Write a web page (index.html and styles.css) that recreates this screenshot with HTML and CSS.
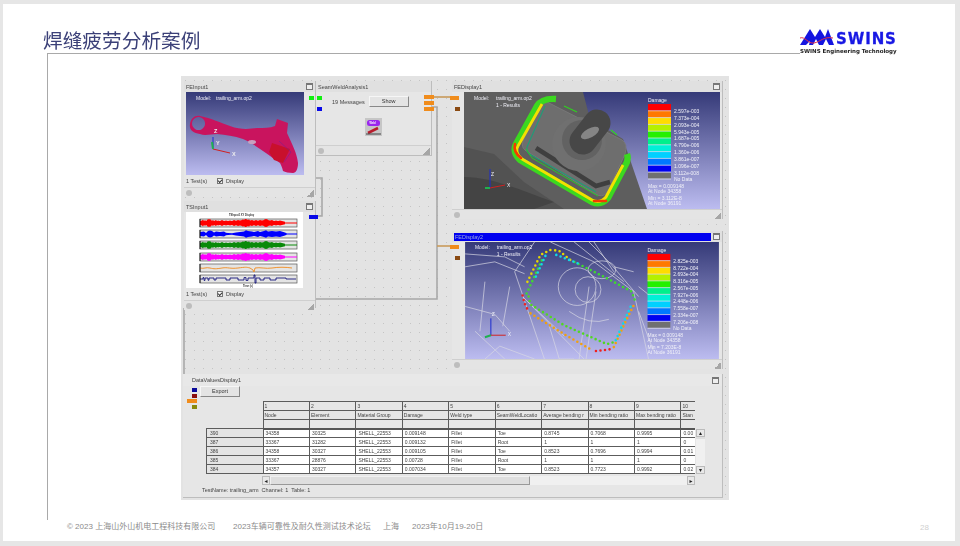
FILE: index.html
```html
<!DOCTYPE html>
<html lang="zh">
<head>
<meta charset="utf-8">
<title>焊缝疲劳分析案例</title>
<link rel="stylesheet" href="styles.css">
</head>
<body>
<main class="slide">
  <header class="head">
    <h1 class="title">焊缝疲劳分析案例</h1>
    <div class="logo">
      <div class="logo-top">
        <svg class="logo-mark" viewBox="0 0 34 17" aria-hidden="true">
          <path class="logo-blue" d="M0 16 10 0 15 8 20 0 25 8 28 0 34 16H29L26 10 23 16H19L16 10 13 16H9L10 12 6 16Z"/>
          <path class="logo-red" d="M0 9C5 7 8 15 14 14S24 7 33 9"/>
        </svg>
        <span class="logo-name">SWINS</span>
      </div>
      <div class="logo-sub">SWINS Engineering Technology</div>
    </div>
  </header>

  <section class="frame">
    <figure class="canvas">
      <svg class="wires" viewBox="0 0 548 424" aria-hidden="true">
        <path class="wire" d="M134 102H141V140H137"/>
        <path class="wire" d="M134 223H256V31H250"/>
        <path class="wire" d="M3 232V323H9"/>
        <path class="wire wire-o" d="M250 21H271"/>
        <path class="wire wire-o" d="M256 170H271"/>
      </svg>

      <article class="win win-fe">
        <div class="bar"><span>FEInput1</span><i class="max"></i></div>
        <svg class="view view-sm" viewBox="0 0 118 83" aria-hidden="true">
          <defs>
            <linearGradient id="sky" x1="0" y1="0" x2="0" y2="1"><stop offset="0" stop-color="#353a78"/><stop offset="1" stop-color="#bcbcf0"/></linearGradient>
          </defs>
          <rect width="118" height="83" fill="url(#sky)"/>
          <path fill="#c9145e" fill-rule="evenodd" d="M14 24C25 26 35 31 44 34 55 38 63 37 71 36 78 36 84 36 89 34L91 27 102 31 101 41C106 52 111 61 112 71 112 77 110 81 107 81 103 81 99 80 97 79 96 75 95 73 94 71 88 67 83 63 77 59 70 54 64 50 57 47 48 44 40 43 31 42 25 42 19 44 14 42 7 41 3 38 4 32 5 26 9 23 14 24ZM12.5 25A6.5 6.5 0 1 0 12.6 25Z"/>
          <ellipse cx="66" cy="50" rx="4" ry="2" fill="#c8a0c0"/>
          <path fill="#c8102c" d="M86 51 104 57 97 71 88 68 83 60Z"/>
          <path fill="none" stroke="#7d1f8a" stroke-width=".6" d="M93 49 105 60 98 70"/>
          <path class="ax-b" d="M27 57V45"/><path class="ax-r" d="M27 57 44 61"/><path class="ax-g" d="M27 57 26 50"/>
          <text class="t6b" x="28" y="41">Z</text><text class="t6b" x="30" y="53">Y</text><text class="t6b" x="46" y="64">X</text>
          <text class="t5w" x="10" y="8">Model:</text><text class="t5w" x="30" y="8">trailing_arm.op2</text>
        </svg>
        <div class="status"><span class="tests">1 Test(s)</span><i class="check"></i><span>Display</span></div>
        <div class="foot"><i class="knob"></i><i class="grip"></i></div>
      </article>

      <article class="win win-seam">
        <div class="bar"><span>SeamWeldAnalysis1</span></div>
        <div class="seam-row"><span>19 Messages</span><button class="btn btn-show">Show</button></div>
        <svg class="seam-icon" viewBox="0 0 17 18" aria-hidden="true">
          <rect width="17" height="18" fill="#c6c6c6"/>
          <rect x="2" y="2" width="13" height="6" rx="2.5" fill="#9a28ee"/>
          <text class="t3w" x="4.5" y="6.3">Weld</text>
          <path d="M3 15 13 10" stroke="#b81c2c" stroke-width="2.6"/>
          <path d="M1 16H16" stroke="#444" stroke-width="1"/>
        </svg>
        <div class="foot foot-end"><i class="knob"></i><i class="grip"></i></div>
      </article>

      <article class="win win-ts">
        <div class="bar"><span>TSInput1</span><i class="max"></i></div>
        <svg class="view view-ts" viewBox="0 0 117 76" aria-hidden="true">
          <defs>
            <path id="wave" d="M0 2 2 1.5 3 .4 4 2 5 1 6 2 7 1.2 8 0 9 .6 10 0 11 1 12 1.8 13 1 14 2 16 1 17 2 18 1.4 20 2 22 1 24 2 26 1.4 28 2 30 1.5 32 2 34 1 36 1.8 38 1 40 1.6 42 1 43 .2 44 1 45 0 46 0 47 .4 48 1 49 .2 50 1.6 52 1 54 1.8 56 1 58 1.8 60 1 62 1.4 64 1 65 0 66 .2 67 0 68 1 70 1.6 72 1 74 2 76 1.4 78 2 80 1.6 82 2 85 2.8V3.6H97V4.4H85V5.2L82 6 80 6.4 78 6 76 6.6 74 6 72 7 70 6.4 68 7 67 8 66 7.8 65 8 64 7 62 6.6 60 7 58 6.2 56 7 54 6.2 52 7 50 6.4 49 7.8 48 7 47 7.6 46 8 45 8 44 7 43 7.8 42 7 40 6.4 38 7 36 6.2 34 7 32 6 30 6.5 28 6 26 6.6 24 6 22 7 20 6 18 6.6 17 6 16 7 14 6 13 7 12 6.2 11 7 10 8 9 7.4 8 8 7 6.8 6 6 5 7 4 6 3 7.6 2 6.5 0 6Z"/>
            <path id="wave-b" d="M0 2 4 1.5 6 3 8 1 10 .6 12 1 14 2.6 16 1.4 20 2 24 1.4 26 2.8 28 3 32 3.2 36 2.4 40 2 44 1.4 46 .2 48 1 52 1.6 54 2 58 1 60 2 64 1 66 .2 68 1.4 72 1 76 1.6 80 1 85 2.6 87 3.4H97V4.6H87L85 5.4 80 7 76 6.4 72 7 68 6.6 66 7.8 64 7 60 6 58 7 54 6 52 6.4 48 7 46 7.8 44 6.6 40 6 36 5.6 32 4.8 28 5 26 5.2 24 6.6 20 6 16 6.6 14 5.4 12 7 10 7.4 8 7 6 5 4 6.5 0 6Z"/>
            <path id="trace" d="M0 4C4 5 6 3 10 4S16 5 22 4 30 5 38 4 46 3 50 4L53 6 54 8 55 4C60 3 66 5 72 4S86 3 92 4"/>
            <path id="trace-b" d="M0 4H3V2.6H4V5.4H5V3H8V5.2H9V3H14V5H16V3H26V5H30V3H38V5H44V2.6H46V5.4H48V3H54V0H55V8H56V3H60V5H64V3H70V5H76V3H86V4H96"/>
          </defs>
          <rect width="117" height="76" fill="#fff"/>
          <text class="t3k" x="43" y="3.5">TSInput1 XY Display</text>
          <g class="strip">
            <g transform="translate(14 7)"><rect class="plot" width="97" height="8"/><use href="#wave" class="w-red"/></g>
            <g transform="translate(14 18)"><rect class="plot" width="97" height="8"/><use href="#wave-b" class="w-blue"/></g>
            <g transform="translate(14 29)"><rect class="plot" width="97" height="8"/><use href="#wave" class="w-green"/></g>
            <g transform="translate(14 41)"><rect class="plot" width="97" height="8"/><use href="#wave" class="w-mag"/></g>
            <g transform="translate(14 52)"><rect class="plot" width="97" height="8"/><use href="#trace" class="l-or"/></g>
            <g transform="translate(14 63)"><rect class="plot" width="97" height="8"/><use href="#trace-b" class="l-navy"/></g>
          </g>
          <path class="axisl" d="M14 7V15M14 18V26M14 29V37M14 41V49M14 52V60M14 63V71"/>
          <text class="t3k" x="57" y="75">Time (s)</text>
        </svg>
        <div class="status"><span class="tests">1 Test(s)</span><i class="check"></i><span>Display</span></div>
        <div class="foot"><i class="knob"></i><i class="grip"></i></div>
      </article>

      <article class="win win-d1">
        <div class="bar"><span>FEDisplay1</span><i class="max"></i></div>
        <svg class="view view-lg" viewBox="0 0 256 117" aria-hidden="true">
          <rect width="256" height="117" fill="url(#sky)"/>
          <path fill="#5e5e5e" d="M0 0H119L126 27 159 47 183 117H0Z"/>
          <path fill="#525252" d="M0 55 30 62 60 90 100 117H0Z"/>
          <path fill="#444" d="M0 85C30 85 60 100 90 110L70 117H0Z"/>
          <path fill="#6e6e6e" stroke="#787878" d="M83 10 158 48Q164 52 161 62L143 101Q138 106 131 102L61 58Q57 55 59 49L74 16Q78 8 83 10Z"/>
          <path fill="none" stroke="#3f3f3f" stroke-width="4.5" d="M72 56 132 94 146 90"/>
          <path fill="none" stroke="#1f9c78" stroke-width="1.1" d="M81 14 63 55Q62 60 67 63L132 100"/>
          <path fill="none" stroke="#28c828" stroke-width="1" d="M62 57 68 66 134 104"/>
          <circle cx="115" cy="52" r="27" fill="#707070"/>
          <circle cx="118" cy="48" r="20" fill="#626262"/>
          <path stroke="#474747" stroke-width="27" stroke-linecap="round" d="M133 31 119 49"/>
          <ellipse cx="126" cy="41" rx="10" ry="4.5" transform="rotate(-28 126 41)" fill="#858585"/>
          <path fill="none" stroke="#3cd820" stroke-width="6.4" stroke-linejoin="round" d="M92 7Q78 6 73 14L52 52Q48 60 56 68L128 110Q137 114 144 106L161 74Q165 68 163 62"/>
          <path fill="none" stroke="#f4e000" stroke-width="2.8" stroke-linejoin="round" d="M78 12 54 54Q50 60 58 67L128 108Q136 112 142 105L159 73"/>
          <path fill="none" stroke="#f43a00" stroke-width="2.6" stroke-linecap="round" d="M51 52Q49 60 57 66M130 109 142 109"/>
          <path fill="none" stroke="#30d020" stroke-width="1.2" d="M100 14 113 20M147 38 153 43"/>
          <path class="ax-b" d="M26 96V77"/><path class="ax-r" d="M26 96 41 93"/><path class="ax-g" d="M26 96 21 96"/>
          <text class="t5w" x="27" y="84">Z</text><text class="t5w" x="43" y="95">X</text>
          <text class="t5w" x="10" y="8">Model:</text><text class="t5w" x="32" y="8">trailing_arm.op2</text>
          <text class="t5w" x="32" y="15">1 - Results</text>
          <text class="t5w" x="184" y="10">Damage</text>
          <g class="legend">
            <rect class="c1" x="184" y="12" width="23" height="6.8"/><rect class="c2" x="184" y="18.8" width="23" height="6.8"/><rect class="c3" x="184" y="25.6" width="23" height="6.8"/><rect class="c4" x="184" y="32.4" width="23" height="6.8"/><rect class="c5" x="184" y="39.2" width="23" height="6.8"/><rect class="c6" x="184" y="46" width="23" height="6.8"/><rect class="c7" x="184" y="52.8" width="23" height="6.8"/><rect class="c8" x="184" y="59.6" width="23" height="6.8"/><rect class="c9" x="184" y="66.4" width="23" height="6.8"/><rect class="c10" x="184" y="73.2" width="23" height="6.8"/><rect class="c11" x="184" y="80.6" width="23" height="6"/>
            <path class="ticks" d="M184 18.8H207M184 25.6H207M184 32.4H207M184 39.2H207M184 46H207M184 52.8H207M184 59.6H207M184 66.4H207M184 73.2H207M184 80H207M184 87H207"/>
          </g>
          <text class="t5w" x="210" y="21">2.597e-003</text><text class="t5w" x="210" y="28">7.373e-004</text><text class="t5w" x="210" y="34.5">2.093e-004</text><text class="t5w" x="210" y="41.5">5.943e-005</text><text class="t5w" x="210" y="48">1.687e-005</text><text class="t5w" x="210" y="55">4.790e-006</text><text class="t5w" x="210" y="62">1.360e-006</text><text class="t5w" x="210" y="69">3.861e-007</text><text class="t5w" x="210" y="75.5">1.096e-007</text><text class="t5w" x="210" y="82.5">3.112e-008</text><text class="t5w" x="210" y="89">No Data</text>
          <text class="t5w" x="184" y="96">Max = 0.009148</text><text class="t5w" x="184" y="100.5">At Node 34358</text><text class="t5w" x="184" y="108">Min = 3.112E-8</text><text class="t5w" x="184" y="112.5">At Node 36191</text>
        </svg>
        <div class="foot"><i class="knob"></i><i class="grip"></i></div>
      </article>

      <article class="win win-d2">
        <div class="bar bar-active"><span>FEDisplay2</span><i class="max"></i></div>
        <svg class="view view-lg" viewBox="0 0 256 118" aria-hidden="true">
          <rect width="256" height="118" fill="url(#sky)"/>
          <g class="mesh">
            <path d="M0 12 40 15 60 25M0 25 30 20 60 32M70 0 50 30 80 118M86 0 130 20 170 50 185 118M110 0 160 40M125 0 145 20 175 55M45 45 38 85M20 40 15 90M0 65 30 73 45 90M58 55 120 118M10 90 40 118M130 0 150 30M125 45 115 118M132 50 122 118M85 85 95 118H110M175 70 190 110M175 45 200 65M20 118 35 105 70 118M150 25 170 30M63 60 100 95"/>
            <circle cx="113" cy="45" r="19"/><circle cx="124" cy="48" r="13"/><ellipse cx="138" cy="28" rx="14" ry="9"/><path d="M105 70Q125 85 145 78"/>
          </g>
          <g class="dots">
            <path class="d-yl" d="M86 8 76 13 62 42"/>
            <path class="d-rd" d="M58 54 60 62 64 70"/>
            <path class="d-or" d="M66 72 100 93 128 109"/>
            <path class="d-rd" d="M132 110 148 108"/>
            <path class="d-or" d="M150 106 162 80 171 62"/>
            <path class="d-gr" d="M171 58 168 50 140 35 110 20"/>
            <path class="d-yl" d="M106 18 95 9 88 8"/>
            <path class="d-in" d="M64 55 66 63 100 84 143 103 150 101"/>
            <path class="d-gr" d="M62 52 79 15"/>
            <path class="d-cy" d="M152 99 167 65M81 14 70 38M92 13 115 22"/>
          </g>
          <path class="ax-b" d="M26 94V77"/><path class="ax-r" d="M26 94 41 94"/><path class="ax-g" d="M26 94 20 96"/>
          <text class="t5w" x="27" y="75">Z</text><text class="t5w" x="43" y="95">X</text>
          <text class="t5w" x="10" y="7.5">Model:</text><text class="t5w" x="32" y="7.5">trailing_arm.op2</text>
          <text class="t5w" x="32" y="14.5">1 - Results</text>
          <text class="t5w" x="184" y="10">Damage</text>
          <g class="legend">
            <rect class="c1" x="184" y="12" width="23" height="6.8"/><rect class="c2" x="184" y="18.8" width="23" height="6.8"/><rect class="c3" x="184" y="25.6" width="23" height="6.8"/><rect class="c4" x="184" y="32.4" width="23" height="6.8"/><rect class="c5" x="184" y="39.2" width="23" height="6.8"/><rect class="c6" x="184" y="46" width="23" height="6.8"/><rect class="c7" x="184" y="52.8" width="23" height="6.8"/><rect class="c8" x="184" y="59.6" width="23" height="6.8"/><rect class="c9" x="184" y="66.4" width="23" height="6.8"/><rect class="c10" x="184" y="73.2" width="23" height="6.8"/><rect class="c11" x="184" y="80.6" width="23" height="6"/>
            <path class="ticks" d="M184 18.8H207M184 25.6H207M184 32.4H207M184 39.2H207M184 46H207M184 52.8H207M184 59.6H207M184 66.4H207M184 73.2H207M184 80H207M184 87H207"/>
          </g>
          <text class="t5w" x="210" y="21">2.825e-003</text><text class="t5w" x="210" y="28">8.722e-004</text><text class="t5w" x="210" y="34.5">2.693e-004</text><text class="t5w" x="210" y="41.5">8.316e-005</text><text class="t5w" x="210" y="48">2.567e-005</text><text class="t5w" x="210" y="55">7.927e-006</text><text class="t5w" x="210" y="62">2.448e-006</text><text class="t5w" x="210" y="69">7.558e-007</text><text class="t5w" x="210" y="75.5">2.334e-007</text><text class="t5w" x="210" y="82.5">7.206e-008</text><text class="t5w" x="210" y="89">No Data</text>
          <text class="t5w" x="184" y="96">Max = 0.009148</text><text class="t5w" x="184" y="100.5">At Node 34358</text><text class="t5w" x="184" y="108">Min = 7.203E-8</text><text class="t5w" x="184" y="112.5">At Node 36191</text>
        </svg>
        <div class="foot"><i class="knob"></i><i class="grip"></i></div>
      </article>

      <article class="win win-data">
        <div class="bar bar-data"><span>DataValuesDisplay1</span><i class="max"></i></div>
        <button class="btn btn-export">Export</button>
        <div class="grid-wrap">
          <div class="table-clip">
            <table class="vals">
              <colgroup><col class="c-head"><col class="c-n"><col class="c-n"><col class="c-n"><col class="c-n"><col class="c-n"><col class="c-n"><col class="c-n"><col class="c-n"><col class="c-n"><col class="c-n"></colgroup>
              <thead>
                <tr><th class="blank"></th><th>1</th><th>2</th><th>3</th><th>4</th><th>5</th><th>6</th><th>7</th><th>8</th><th>9</th><th>10</th></tr>
                <tr><th class="blank"></th><th>Node</th><th>Element</th><th>Material Group</th><th>Damage</th><th>Weld type</th><th>SeamWeldLocatio</th><th>Average bending r</th><th>Min bending ratio</th><th>Max bending ratio</th><th>Stan</th></tr>
                <tr class="last-h"><th class="blank"></th><th></th><th></th><th></th><th></th><th></th><th></th><th></th><th></th><th></th><th></th></tr>
              </thead>
              <tbody>
                <tr><th>390</th><td>34358</td><td>30325</td><td>SHELL_22553</td><td>0.009148</td><td>Fillet</td><td>Toe</td><td>0.8745</td><td>0.7068</td><td>0.9995</td><td>0.00</td></tr>
                <tr><th>387</th><td>33367</td><td>31282</td><td>SHELL_22553</td><td>0.009132</td><td>Fillet</td><td>Root</td><td>1</td><td>1</td><td>1</td><td>0</td></tr>
                <tr><th>386</th><td>34358</td><td>30327</td><td>SHELL_22553</td><td>0.009105</td><td>Fillet</td><td>Toe</td><td>0.8523</td><td>0.7696</td><td>0.9994</td><td>0.01</td></tr>
                <tr><th>385</th><td>33367</td><td>28876</td><td>SHELL_22553</td><td>0.00728</td><td>Fillet</td><td>Root</td><td>1</td><td>1</td><td>1</td><td>0</td></tr>
                <tr><th>384</th><td>34357</td><td>30327</td><td>SHELL_22553</td><td>0.007034</td><td>Fillet</td><td>Toe</td><td>0.8523</td><td>0.7723</td><td>0.9992</td><td>0.02</td></tr>
              </tbody>
            </table>
            <div class="hscroll"><i class="arrow">◂</i><i class="thumb"></i><i class="track"></i><i class="arrow">▸</i></div>
          </div>
          <div class="vscroll"><i class="arrow">▴</i><i class="vthumb"></i><i class="vtrack"></i><i class="arrow">▾</i></div>
        </div>
        <div class="testname">TestName: trailing_arm  Channel: 1  Table: 1</div>
      </article>

      <i class="port p-g1"></i><i class="port p-g2"></i><i class="port p-b1"></i><i class="port p-b2"></i>
      <i class="port p-o1"></i><i class="port p-o2"></i><i class="port p-o3"></i>
      <i class="port p-o4"></i><i class="port p-br1"></i><i class="port p-o5"></i><i class="port p-br2"></i>
      <i class="port p-d1"></i><i class="port p-d2"></i><i class="port p-d3"></i><i class="port p-d4"></i>
    </figure>
  </section>

  <footer class="foot-line">
    <span class="f1">© 2023 上海山外山机电工程科技有限公司</span>
    <span class="f2">2023车辆可靠性及耐久性测试技术论坛</span>
    <span class="f3">上海</span>
    <span class="f4">2023年10月19-20日</span>
    <span class="page">28</span>
  </footer>
</main>
</body>
</html>
```

FILE: styles.css
```css
* { box-sizing: border-box; }
html, body { margin: 0; height: 100%; }
body {
  width: 960px;
  height: 546px;
  padding: 4px 5px 4px 3px;
  background: #e6e6e6;
  overflow: hidden;
  font-family: "Liberation Sans", "Noto Sans CJK SC", sans-serif;
}
.slide {
  height: 537px;
  background: #fff;
  display: flex;
  flex-direction: column;
}

/* header */
.head {
  height: 49px;
  display: flex;
  justify-content: space-between;
  padding-left: 40px;
  padding-right: 56px;
}
.title {
  margin: 23px 0 0;
  font: 400 19.7px/26px "Noto Sans CJK SC", sans-serif;
  color: #3b4078;
  filter: blur(.3px);
}
.logo { margin-top: 22px; width: 99px; filter: blur(.3px); position: relative; z-index: 1; }
.logo-top { display: flex; align-items: flex-end; height: 20px; }
.logo-mark { width: 34px; height: 17px; flex: none; }
.logo-blue { fill: #1414e0; }
.logo-red { fill: none; stroke: #e0304a; stroke-width: 1; }
.logo-name {
  font: 700 15px/14px "DejaVu Sans", sans-serif;
  letter-spacing: .9px;
  color: #1818e4;
  -webkit-text-stroke: .3px #1818e4;
  margin-left: 2px;
}
.logo-sub {
  font: 700 5.5px/7px "DejaVu Sans", sans-serif;
  color: #222;
  white-space: nowrap;
  margin-top: 2px;
  background: #fff;
}

/* content frame */
.frame {
  margin-left: 44px;
  width: 753px;
  height: 467px;
  border-top: 1px solid #a9a9a9;
  border-left: 1px solid #a9a9a9;
  padding: 22px 0 0 133px;
}
.canvas {
  position: relative;
  margin: 0;
  width: 548px;
  height: 424px;
  background-color: #e3e3e3;
  background-image: radial-gradient(circle, #c4c4c4 .6px, transparent .8px);
  background-size: 9px 9px;
  filter: blur(.35px);
  overflow: hidden;
  color: #333;
  font-size: 5.5px;
}
.wires { position: absolute; inset: 0; width: 548px; height: 424px; }
.wire { fill: none; stroke: #a8a8a8; stroke-width: 1.6; }
.wire-o { stroke: #c89a5a; }

/* windows */
.win {
  position: absolute;
  background: #e6e6e6;
  border-right: 1px solid #bdbdbd;
  border-bottom: 1px solid #bdbdbd;
  display: flex;
  flex-direction: column;
}
.win-fe { left: 3px; top: 5px; width: 132px; height: 114px; }
.win-seam { left: 135px; top: 5px; width: 116px; height: 75px; }
.win-ts { left: 3px; top: 125px; width: 132px; height: 107px; }
.win-d1 { left: 271px; top: 5px; width: 271px; height: 138px; }
.win-d2 { left: 271px; top: 155px; width: 271px; height: 138px; }
.win-data { left: 2px; top: 298px; width: 540px; height: 124px; }

.bar {
  flex: none;
  height: 11px;
  padding: 0 2px;
  display: flex;
  align-items: center;
  justify-content: space-between;
  background: #e0e0e0;
  color: #444;
  font-size: 5.5px;
}
.bar-active span { flex: 1; background: #0000f0; color: #9ad; height: 8px; line-height: 8px; margin-right: 2px; padding-left: 1px; }
.bar-data { background: #e8e8e8; padding: 0 3px 0 9px; height: 12px; }
.max {
  flex: none;
  width: 7px;
  height: 7px;
  border: 1px solid #777;
  border-top-width: 2px;
  background: #eee;
}
.view { display: block; flex: none; }
.view-sm { width: 118px; height: 83px; margin-left: 2px; }
.view-ts { width: 117px; height: 76px; margin-left: 2px; }
.view-lg { width: 256px; height: 117px; margin-left: 12px; }

.status {
  flex: none;
  height: 12px;
  padding-left: 2px;
  display: flex;
  align-items: center;
  font-size: 5.5px;
  color: #444;
}
.tests { width: 31px; }
.check {
  position: relative;
  width: 6px;
  height: 6px;
  margin-right: 3px;
  border: 1px solid #777;
  background: #f4f4f4;
}
.check::after {
  content: "";
  position: absolute;
  left: 0;
  top: 0;
  width: 3px;
  height: 2px;
  border-left: 1px solid #333;
  border-bottom: 1px solid #333;
  transform: rotate(-45deg);
}
.foot {
  margin-top: auto;
  height: 10px;
  flex: none;
  display: flex;
  align-items: center;
  justify-content: space-between;
  padding: 0 1px 0 2px;
  background: #e4e4e4;
  border-top: 1px solid #cfcfcf;
}
.knob { width: 6px; height: 6px; border-radius: 50%; background: #bdbdbd; }
.grip {
  width: 7px;
  height: 7px;
  align-self: flex-end;
  background: linear-gradient(135deg, transparent 50%, #a6a6a6 50%);
}

/* seam window */
.seam-row {
  display: flex;
  align-items: center;
  gap: 4px;
  margin-top: 4px;
  padding-left: 16px;
  font-size: 5.5px;
  color: #444;
}
.btn {
  padding: 0;
  font: 5.5px/9px "Liberation Sans", sans-serif;
  color: #333;
  background: #e4e4e4;
  border: 1px solid;
  border-color: #f6f6f6 #888 #888 #f6f6f6;
}
.btn-show { width: 40px; height: 11px; }
.seam-icon { display: block; width: 17px; height: 18px; margin: 11px 0 0 49px; }

/* ports */
.port { position: absolute; width: 5px; height: 4px; }
.p-g1 { left: 128px; top: 19.5px; background: #10f010; }
.p-g2 { left: 136px; top: 19.5px; background: #10f010; }
.p-b1 { left: 136px; top: 30.5px; background: #0808e8; }
.p-b2 { left: 128px; top: 139px; width: 9px; background: #0808e8; }
.p-o1 { left: 243px; top: 19px; width: 10px; background: #f08c1c; }
.p-o2 { left: 243px; top: 25px; width: 10px; background: #f08c1c; }
.p-o3 { left: 243px; top: 31px; width: 10px; background: #f08c1c; }
.p-o4 { left: 269px; top: 20px; width: 9px; background: #f08c1c; }
.p-br1 { left: 273.5px; top: 31px; background: #8a4a12; }
.p-o5 { left: 269px; top: 169px; width: 9px; background: #f08c1c; }
.p-br2 { left: 273.5px; top: 180px; background: #8a4a12; }
.p-d1 { left: 11px; top: 312px; background: #0a0a9a; }
.p-d2 { left: 11px; top: 318px; background: #8a0e0e; }
.p-d3 { left: 6px; top: 323px; width: 10px; background: #f08c1c; }
.p-d4 { left: 11px; top: 329px; background: #8a8a0e; }

/* data window */
.btn-export { width: 40px; height: 11px; margin: 0 0 0 17px; flex: none; }
.grid-wrap { display: flex; align-items: flex-start; margin: 4px 0 0 23px; }
.table-clip { width: 489px; overflow: hidden; flex: none; }
.vals {
  table-layout: fixed;
  border-collapse: collapse;
  width: 521px;
  font-size: 5px;
  color: #444;
}
.c-head { width: 56.5px; }
.c-n { width: 46.45px; }
.vals th, .vals td {
  height: 9px;
  padding: 0 1px;
  border: 1px solid #5c5c5c;
  text-align: left;
  font-weight: 400;
  white-space: nowrap;
  overflow: hidden;
  line-height: 7px;
}
.vals td { background: #fff; padding-left: 2px; }
.vals .blank { border: 0; border-right: 1px solid #5c5c5c; background: transparent; }
.vals tbody th { background: #e4e4e4; padding-left: 3px; }
.last-h th { border-bottom: 2px solid #555; }
.hscroll { display: flex; margin: 2px 0 0 56px; height: 9px; width: 433px; }
.hscroll .arrow { width: 8px; background: #e8e8e8; border: 1px solid #bbb; font: 6px/7px "DejaVu Sans", sans-serif; text-align: center; flex: none; color: #222; }
.thumb { width: 260px; background: #dedede; border: 1px solid; border-color: #f0f0f0 #999 #999 #f0f0f0; flex: none; }
.track { flex: 1; background: #f0f0f0; }
.vscroll { display: flex; flex-direction: column; width: 9px; height: 45px; margin: 28px 0 0 1px; }
.vscroll .arrow { height: 8px; background: #e8e8e8; border: 1px solid #bbb; font: 6px/6px "DejaVu Sans", sans-serif; text-align: center; flex: none; color: #222; }
.vthumb { height: 2px; background: #dedede; }
.vtrack { flex: 1; background: #f0f0f0; }
.testname { margin: 2px 0 0 19px; font-size: 5.5px; color: #444; white-space: pre; }

/* svg text and parts */
.t5w { font: 5px "Liberation Sans", sans-serif; fill: #f0f0f8; }
.t6b { font: 700 5.5px "Liberation Sans", sans-serif; fill: #eee; }
.t3w { font: 700 2.6px "Liberation Sans", sans-serif; fill: #fff; }
.t3k { font: 700 2.6px "Liberation Sans", sans-serif; fill: #333; }
.ax-b, .ax-r, .ax-g { fill: none; stroke-width: 1; }
.ax-b { stroke: #1a2ad0; }
.ax-r { stroke: #d02020; }
.ax-g { stroke: #20b050; stroke-width: 2; }
.plot { fill: #e4e4e4; stroke: #555; stroke-width: .7; }
.axisl { fill: none; stroke: #111; stroke-width: .9; }
.w-red { fill: #f00; }
.w-blue { fill: #00f; }
.w-green { fill: #0a8a0a; }
.w-mag { fill: #f0f; }
.l-or, .l-navy { fill: none; stroke-width: .9; }
.l-or { stroke: #f08a1c; }
.l-navy { stroke: #14147c; stroke-width: .9; }
.c1 { fill: #f00; }
.c2 { fill: #ff7800; }
.c3 { fill: #ffdc00; }
.c4 { fill: #b4f000; }
.c5 { fill: #24f000; }
.c6 { fill: #00f08c; }
.c7 { fill: #00f0d8; }
.c8 { fill: #00d0ff; }
.c9 { fill: #0078ff; }
.c10 { fill: #0000f0; }
.c11 { fill: #707070; }
.ticks { stroke: #e8e8f0; stroke-width: .7; fill: none; }
.mesh path, .mesh circle, .mesh ellipse { fill: none; stroke: #d8d8e4; stroke-width: .7; }
.dots path { fill: none; stroke-width: 2.6; stroke-linecap: round; stroke-dasharray: 0 4.6; }
.d-yl { stroke: #e6d800; }
.d-rd { stroke: #ee2020; }
.d-or { stroke: #f0a010; }
.d-gr { stroke: #40d830; }
.d-in { stroke: #50d820; }
.d-cy { stroke: #10d8e8; }

/* footer */
.foot-line {
  position: relative;
  flex: 1;
  display: flex;
  align-items: flex-start;
  padding: 1px 0 0 64px;
  font: 8px/11px "Liberation Sans", "Noto Sans CJK SC", sans-serif;
  color: #8a8a8a;
  white-space: nowrap;
}
.f1 { width: 166px; }
.f2 { width: 150px; }
.f3 { width: 29px; }
.f4 { width: 508px; }
.page { color: #d0d0d0; margin-top: 1px; }
```
